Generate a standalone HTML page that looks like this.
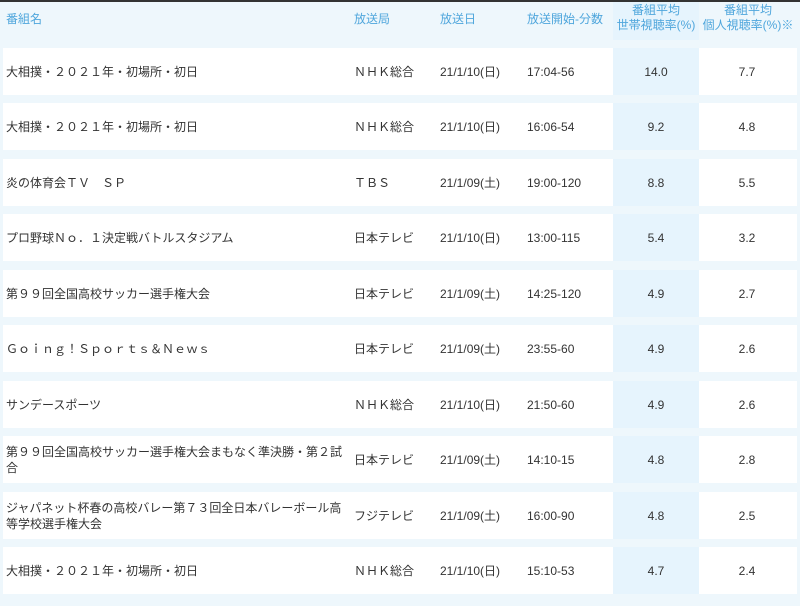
<!DOCTYPE html>
<html><head><meta charset="utf-8"><style>
*{margin:0;padding:0;box-sizing:border-box}
body{width:800px;height:606px;background:#eef7fc;font-family:"Liberation Sans","Noto Sans CJK JP",sans-serif;font-size:12px;color:#333;position:relative;overflow:hidden}
.top{position:absolute;left:0;top:0;width:800px;height:2px;background:#333}
.h{position:absolute;color:#4fa6dc;font-size:12px}
.hc{text-align:center;line-height:15px}
.row{position:absolute;left:3px;width:794px;height:47px;background:#fff}
.c{position:absolute;top:0;height:47px;display:flex;align-items:center;line-height:16px}
.b5{position:absolute;left:610px;top:0;width:86px;height:47px;background:#e6f4fd}
.hb{position:absolute;left:613px;top:2px;width:86px;height:38px;background:#e6f4fd}
</style></head><body>
<div class="top"></div>
<div class="hb"></div>
<div class="h" style="left:6px;top:10px">番組名</div>
<div class="h" style="left:354px;top:10px">放送局</div>
<div class="h" style="left:440px;top:10px">放送日</div>
<div class="h" style="left:527px;top:10px">放送開始-分数</div>
<div class="h hc" style="left:613px;top:3px;width:86px">番組平均<br>世帯視聴率(%)</div>
<div class="h hc" style="left:700px;top:3px;width:96px">番組平均<br>個人視聴率(%)※</div>

<div id="rows"></div>
<script></script>
<div class="row" style="top:48px"><div class="b5"></div><div class="c" style="left:3px;width:340px">大相撲・２０２１年・初場所・初日</div><div class="c" style="left:351px">ＮＨＫ総合</div><div class="c" style="left:437px">21/1/10(日)</div><div class="c" style="left:524px">17:04-56</div><div class="c" style="left:610px;width:86px;justify-content:center">14.0</div><div class="c" style="left:697px;width:94px;justify-content:center">7.7</div></div>
<div class="row" style="top:103px"><div class="b5"></div><div class="c" style="left:3px;width:340px">大相撲・２０２１年・初場所・初日</div><div class="c" style="left:351px">ＮＨＫ総合</div><div class="c" style="left:437px">21/1/10(日)</div><div class="c" style="left:524px">16:06-54</div><div class="c" style="left:610px;width:86px;justify-content:center">9.2</div><div class="c" style="left:697px;width:94px;justify-content:center">4.8</div></div>
<div class="row" style="top:159px"><div class="b5"></div><div class="c" style="left:3px;width:340px">炎の体育会ＴＶ　ＳＰ</div><div class="c" style="left:351px">ＴＢＳ</div><div class="c" style="left:437px">21/1/09(土)</div><div class="c" style="left:524px">19:00-120</div><div class="c" style="left:610px;width:86px;justify-content:center">8.8</div><div class="c" style="left:697px;width:94px;justify-content:center">5.5</div></div>
<div class="row" style="top:214px"><div class="b5"></div><div class="c" style="left:3px;width:340px">プロ野球Ｎｏ．１決定戦バトルスタジアム</div><div class="c" style="left:351px">日本テレビ</div><div class="c" style="left:437px">21/1/10(日)</div><div class="c" style="left:524px">13:00-115</div><div class="c" style="left:610px;width:86px;justify-content:center">5.4</div><div class="c" style="left:697px;width:94px;justify-content:center">3.2</div></div>
<div class="row" style="top:270px"><div class="b5"></div><div class="c" style="left:3px;width:340px">第９９回全国高校サッカー選手権大会</div><div class="c" style="left:351px">日本テレビ</div><div class="c" style="left:437px">21/1/09(土)</div><div class="c" style="left:524px">14:25-120</div><div class="c" style="left:610px;width:86px;justify-content:center">4.9</div><div class="c" style="left:697px;width:94px;justify-content:center">2.7</div></div>
<div class="row" style="top:325px"><div class="b5"></div><div class="c" style="left:3px;width:340px">Ｇｏｉｎｇ！Ｓｐｏｒｔｓ＆Ｎｅｗｓ</div><div class="c" style="left:351px">日本テレビ</div><div class="c" style="left:437px">21/1/09(土)</div><div class="c" style="left:524px">23:55-60</div><div class="c" style="left:610px;width:86px;justify-content:center">4.9</div><div class="c" style="left:697px;width:94px;justify-content:center">2.6</div></div>
<div class="row" style="top:381px"><div class="b5"></div><div class="c" style="left:3px;width:340px">サンデースポーツ</div><div class="c" style="left:351px">ＮＨＫ総合</div><div class="c" style="left:437px">21/1/10(日)</div><div class="c" style="left:524px">21:50-60</div><div class="c" style="left:610px;width:86px;justify-content:center">4.9</div><div class="c" style="left:697px;width:94px;justify-content:center">2.6</div></div>
<div class="row" style="top:436px"><div class="b5"></div><div class="c" style="left:3px;width:340px">第９９回全国高校サッカー選手権大会まもなく準決勝・第２試合</div><div class="c" style="left:351px">日本テレビ</div><div class="c" style="left:437px">21/1/09(土)</div><div class="c" style="left:524px">14:10-15</div><div class="c" style="left:610px;width:86px;justify-content:center">4.8</div><div class="c" style="left:697px;width:94px;justify-content:center">2.8</div></div>
<div class="row" style="top:492px"><div class="b5"></div><div class="c" style="left:3px;width:340px">ジャパネット杯春の高校バレー第７３回全日本バレーボール高等学校選手権大会</div><div class="c" style="left:351px">フジテレビ</div><div class="c" style="left:437px">21/1/09(土)</div><div class="c" style="left:524px">16:00-90</div><div class="c" style="left:610px;width:86px;justify-content:center">4.8</div><div class="c" style="left:697px;width:94px;justify-content:center">2.5</div></div>
<div class="row" style="top:547px"><div class="b5"></div><div class="c" style="left:3px;width:340px">大相撲・２０２１年・初場所・初日</div><div class="c" style="left:351px">ＮＨＫ総合</div><div class="c" style="left:437px">21/1/10(日)</div><div class="c" style="left:524px">15:10-53</div><div class="c" style="left:610px;width:86px;justify-content:center">4.7</div><div class="c" style="left:697px;width:94px;justify-content:center">2.4</div></div>
</body></html>
